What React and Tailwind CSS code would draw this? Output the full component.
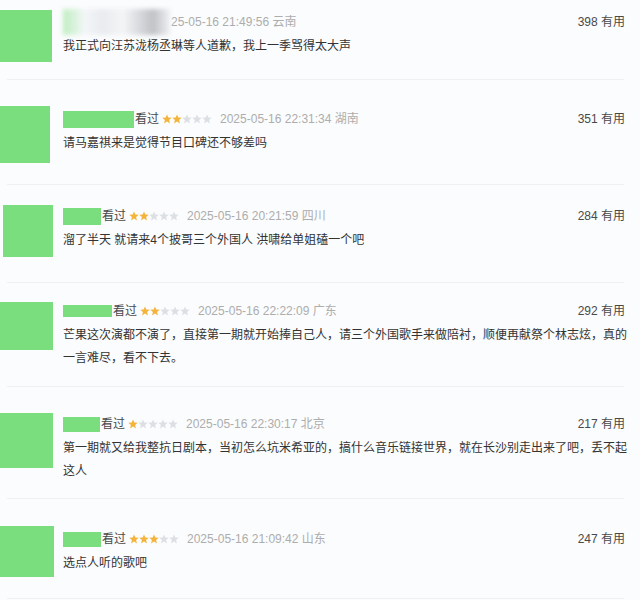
import React from "react";

const GREEN = "bg-[#7ade7e]";

const Stars = ({ n }) => (
  <span className="flex items-center">
    {[0, 1, 2, 3, 4].map((i) => (
      <svg key={i} width="10" height="10" viewBox="0 0 10 10">
        <polygon
          points="5,0.4 6.3,3.6 9.7,3.8 7.1,6 7.9,9.4 5,7.5 2.1,9.4 2.9,6 0.3,3.8 3.7,3.6"
          fill={i < n ? "#f4b43b" : "#dcdfe4"}
        />
      </svg>
    ))}
  </span>
);

const comments = [
  {
    rowCls: "h-[79px]",
    avCls: "ml-0 mt-[10px] w-[52px] h-[52px]",
    bodyCls: "pt-[12px]",
    blurred: true,
    date: "25-05-16 21:49:56 云南",
    votes: 398,
    lines: "我正式向汪苏泷杨丞琳等人道歉，我上一季骂得太大声",
  },
  {
    rowCls: "h-[104px]",
    avCls: "ml-0 mt-[26px] w-[50px] h-[57px]",
    bodyCls: "pt-[29px]",
    nameCls: "w-[71px] h-[17px]",
    stars: 2,
    date: "2025-05-16 22:31:34 湖南",
    votes: 351,
    lines: "请马嘉祺来是觉得节目口碑还不够差吗",
  },
  {
    rowCls: "h-[97px]",
    avCls: "ml-[3px] mt-[20px] w-[50px] h-[52px]",
    bodyCls: "pt-[21px]",
    nameCls: "w-[38px] h-[17px]",
    stars: 2,
    date: "2025-05-16 20:21:59 四川",
    votes: 284,
    lines: "溜了半天 就请来4个披哥三个外国人 洪啸给单姐磕一个吧",
  },
  {
    rowCls: "h-[103px]",
    avCls: "ml-0 mt-[19px] w-[53px] h-[48px]",
    bodyCls: "pt-[18px]",
    nameCls: "w-[49px] h-[12px]",
    stars: 2,
    date: "2025-05-16 22:22:09 广东",
    votes: 292,
    lines:
      "芒果这次演都不演了，直接第一期就开始捧自己人，请三个外国歌手来做陪衬，顺便再献祭个林志炫，真的一言难尽，看不下去。",
  },
  {
    rowCls: "h-[111px]",
    avCls: "ml-0 mt-[26px] w-[53px] h-[55px]",
    bodyCls: "pt-[27px]",
    nameCls: "w-[37px] h-[15px]",
    stars: 1,
    date: "2025-05-16 22:30:17 北京",
    votes: 217,
    lines:
      "第一期就又给我整抗日剧本，当初怎么坑米希亚的，搞什么音乐链接世界，就在长沙别走出来了吧，丢不起这人",
  },
  {
    rowCls: "h-[99px]",
    avCls: "ml-0 mt-[27px] w-[54px] h-[51px]",
    bodyCls: "pt-[30px]",
    nameCls: "w-[38px] h-[15px]",
    stars: 3,
    date: "2025-05-16 21:09:42 山东",
    votes: 247,
    lines: "选点人听的歌吧",
  },
];

const Comment = ({ c }) => (
  <>
    <div className={`flex ${c.rowCls}`}>
      <div className="w-[63px] shrink-0">
        <div className={`${c.avCls} ${GREEN}`} />
      </div>
      <div className={`flex-1 pr-[10px] ${c.bodyCls}`}>
        <div className="flex items-center justify-between h-[20px]">
          <div className="flex items-center text-[12px]">
            {c.blurred ? (
              <div className="w-[107px] h-[26px] mr-[1px] blur-[2px] bg-[linear-gradient(90deg,#bfeec0_0px,#f3f6f8_22px,#e9ebee_40px,#f4f5f7_60px,#d5d7db_78px,#c0c2c6_90px,#eef0f2_107px)]" />
            ) : (
              <>
                <div className={`${c.nameCls} ${GREEN}`} />
                <span className="ml-[1px] text-[#494949]">看过</span>
                <span className="ml-[3px]">
                  <Stars n={c.stars} />
                </span>
                <span className="w-[8px]" />
              </>
            )}
            <span className="text-[#adadad]">{c.date}</span>
          </div>
          <span className="mr-[5px] text-[12px] text-[#494949]">{c.votes} 有用</span>
        </div>
        <p className="mt-[3px] text-[12px] leading-[23px] text-[#333]">{c.lines}</p>
      </div>
    </div>
    <div className="ml-[7px] w-[617px] h-px bg-[#eef0f3]" />
  </>
);

export default function App() {
  return (
    <div className="w-[640px] h-[600px] overflow-hidden bg-[#fbfcfd] font-['Liberation_Sans','Noto_Sans_CJK_SC',sans-serif]">
      {comments.map((c, i) => (
        <Comment key={i} c={c} />
      ))}
    </div>
  );
}
